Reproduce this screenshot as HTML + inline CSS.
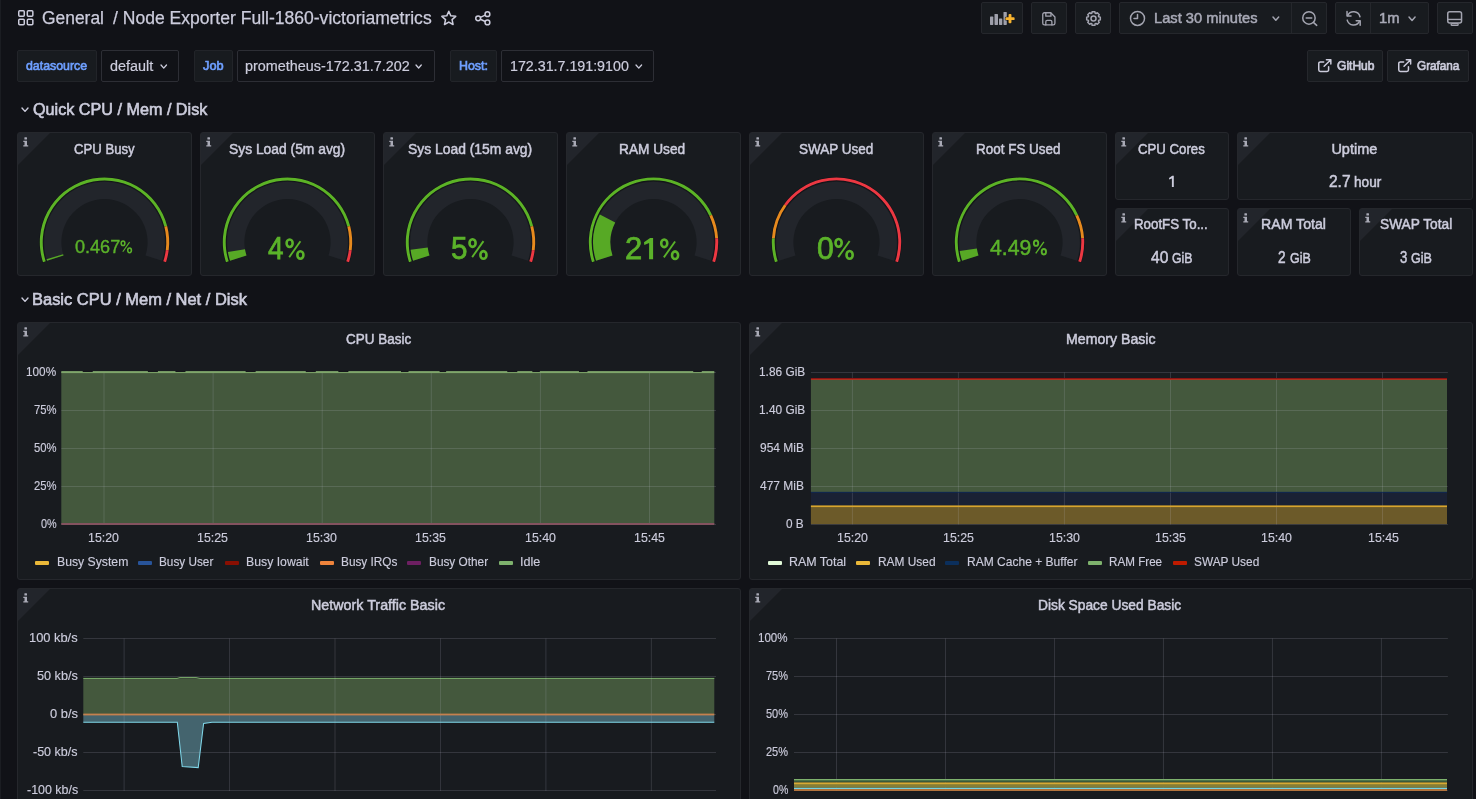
<!DOCTYPE html>
<html><head><meta charset="utf-8"><title>Node Exporter Full</title><style>
html,body{margin:0;padding:0;background:#111217;}
body{width:1476px;height:799px;overflow:hidden;position:relative;font-family:"Liberation Sans", sans-serif;}
.t{position:absolute;line-height:1;white-space:pre;transform-origin:0 0;}
.b{position:absolute;box-sizing:border-box;}
.p{position:absolute;box-sizing:border-box;background:#181b1f;border:1px solid #25272c;border-radius:3px;overflow:hidden;}
svg{position:absolute;overflow:visible;}
</style></head><body>
<div class="b" style="left:0.00px;top:0.00px;width:1.20px;height:799.00px;background:#1b1d22;border-radius:0px;"></div>
<svg style="left:17.80px;top:10.00px;" width="15.6" height="15.6" viewBox="0 0 15.6 15.6"><rect x="0.75" y="0.75" width="5.52" height="5.52" rx="1" fill="none" stroke="#ccccdc" stroke-width="1.5"/><rect x="0.75" y="9.33" width="5.52" height="5.52" rx="1" fill="none" stroke="#ccccdc" stroke-width="1.5"/><rect x="9.33" y="0.75" width="5.52" height="5.52" rx="1" fill="none" stroke="#ccccdc" stroke-width="1.5"/><rect x="9.33" y="9.33" width="5.52" height="5.52" rx="1" fill="none" stroke="#ccccdc" stroke-width="1.5"/></svg>
<svg style="left:0;top:0" width="1476" height="60"><polygon points="448.80,11.30 450.82,15.82 455.74,16.34 452.06,19.66 453.09,24.51 448.80,22.03 444.51,24.51 445.54,19.66 441.86,16.34 446.78,15.82" fill="none" stroke="#ccccdc" stroke-width="1.5" stroke-linejoin="round"/></svg>
<svg style="left:475.00px;top:10.60px;" width="15.600000000000023" height="14.6" viewBox="0 0 15.600000000000023 14.6"><circle cx="12.45" cy="3.15" r="2.40" fill="none" stroke="#ccccdc" stroke-width="1.5"/><circle cx="3.15" cy="7.30" r="2.40" fill="none" stroke="#ccccdc" stroke-width="1.5"/><circle cx="12.45" cy="11.45" r="2.40" fill="none" stroke="#ccccdc" stroke-width="1.5"/><line x1="5.34" y1="6.32" x2="10.26" y2="4.13" stroke="#ccccdc" stroke-width="1.5"/><line x1="5.34" y1="8.28" x2="10.26" y2="10.47" stroke="#ccccdc" stroke-width="1.5"/></svg>
<div class="b" style="left:981.40px;top:2.00px;width:41.80px;height:32.00px;background:#181b1f;border-radius:2px;border:1px solid #25272c;"></div>
<div class="b" style="left:1031.30px;top:2.00px;width:35.90px;height:32.00px;background:#181b1f;border-radius:2px;border:1px solid #25272c;"></div>
<div class="b" style="left:1075.30px;top:2.00px;width:36.00px;height:32.00px;background:#181b1f;border-radius:2px;border:1px solid #25272c;"></div>
<div class="b" style="left:1119.40px;top:2.00px;width:207.90px;height:32.00px;background:#181b1f;border-radius:2px;border:1px solid #25272c;"></div>
<div class="b" style="left:1335.40px;top:2.00px;width:93.40px;height:32.00px;background:#181b1f;border-radius:2px;border:1px solid #25272c;"></div>
<div class="b" style="left:1437.20px;top:2.00px;width:35.60px;height:32.00px;background:#181b1f;border-radius:2px;border:1px solid #25272c;"></div>
<div class="b" style="left:1291.20px;top:2.00px;width:1.00px;height:32.00px;background:#25272c;border-radius:0px;"></div>
<div class="b" style="left:1370.10px;top:2.00px;width:1.00px;height:32.00px;background:#25272c;border-radius:0px;"></div>
<svg style="left:0;top:0" width="1476" height="40"><rect x="990.00" y="16.60" width="3.30" height="8.30" rx="0.6" fill="#9fa0ab"/><rect x="994.50" y="14.00" width="3.50" height="10.90" rx="0.6" fill="#9fa0ab"/><rect x="999.00" y="18.50" width="3.30" height="6.40" rx="0.6" fill="#9fa0ab"/><rect x="1003.50" y="11.90" width="3.30" height="13.00" rx="0.6" fill="#9fa0ab"/><rect x="1004.90" y="16.65" width="10.2" height="3.9" rx="1.2" fill="#181b1f"/><rect x="1008.05" y="13.50" width="3.9" height="10.2" rx="1.2" fill="#181b1f"/><rect x="1005.40" y="17.15" width="9.2" height="2.9" rx="0.9" fill="#f7b32f"/><rect x="1008.55" y="14.00" width="2.9" height="9.2" rx="0.9" fill="#f7b32f"/></svg>
<svg style="left:1042.00px;top:11.80px;" width="13.7" height="13.7" viewBox="0 0 13.7 13.7"><g transform="scale(0.7611)" fill="none" stroke="#a3a4b0" stroke-width="1.7" stroke-linejoin="round" stroke-linecap="round"><path d="M3.2,1 H11.5 L17,6.5 V14.8 A2.2,2.2 0 0 1 14.8,17 H3.2 A2.2,2.2 0 0 1 1,14.8 V3.2 A2.2,2.2 0 0 1 3.2,1 Z"/><path d="M5,1 V5.5 H11.8 V1.5"/><path d="M5,17 V12.8 A1.8,1.8 0 0 1 6.8,11 H11.2 A1.8,1.8 0 0 1 13,12.8 V17"/></g></svg>
<svg style="left:0;top:0" width="1476" height="40"><path d="M1098.81,16.86 L1100.31,17.12 L1100.31,19.88 L1098.81,20.14 L1098.42,21.09 L1099.29,22.34 L1097.34,24.29 L1096.09,23.42 L1095.14,23.81 L1094.88,25.31 L1092.12,25.31 L1091.86,23.81 L1090.91,23.42 L1089.66,24.29 L1087.71,22.34 L1088.58,21.09 L1088.19,20.14 L1086.69,19.88 L1086.69,17.12 L1088.19,16.86 L1088.58,15.91 L1087.71,14.66 L1089.66,12.71 L1090.91,13.58 L1091.86,13.19 L1092.12,11.69 L1094.88,11.69 L1095.14,13.19 L1096.09,13.58 L1097.34,12.71 L1099.29,14.66 L1098.42,15.91 Z" fill="none" stroke="#a3a4b0" stroke-width="1.5" stroke-linejoin="round"/><circle cx="1093.50" cy="18.50" r="2.50" fill="none" stroke="#a3a4b0" stroke-width="1.5"/></svg>
<svg style="left:0;top:0" width="1476" height="40"><circle cx="1137.50" cy="18.40" r="7.00" fill="none" stroke="#a3a4b0" stroke-width="1.5"/><polyline points="1137.50,14.55 1137.50,18.40 1134.00,18.40" fill="none" stroke="#a3a4b0" stroke-width="1.5" stroke-linecap="round" stroke-linejoin="round"/></svg>
<svg style="left:1272.75px;top:17.00px;" width="5.7000000000000455" height="3.192000000000026" viewBox="0 0 5.7000000000000455 3.192000000000026"><polyline points="0,0 2.85,3.19 5.70,0" fill="none" stroke="#a3a4b0" stroke-width="1.5" stroke-linecap="round" stroke-linejoin="round"/></svg>
<svg style="left:1301.80px;top:10.90px;" width="15.5" height="15.1" viewBox="0 0 15.5 15.1"><circle cx="6.95" cy="6.95" r="6.20" fill="none" stroke="#a3a4b0" stroke-width="1.5"/><line x1="11.41" y1="11.41" x2="14.70" y2="14.30" stroke="#a3a4b0" stroke-width="1.6" stroke-linecap="round"/><line x1="4.16" y1="6.95" x2="9.74" y2="6.95" stroke="#a3a4b0" stroke-width="1.5" stroke-linecap="round"/></svg>
<svg style="left:0;top:0" width="1476" height="40"><g transform="translate(2707.20,0) scale(-1,1)"><path d="M1347.22,16.69 A6.60,6.60 0 0 1 1359.58,15.61" fill="none" stroke="#a3a4b0" stroke-width="1.5" stroke-linecap="round"/><path d="M1359.98,20.11 A6.60,6.60 0 0 1 1347.62,21.19" fill="none" stroke="#a3a4b0" stroke-width="1.5" stroke-linecap="round"/><polyline points="1360.18,11.61 1360.18,16.01 1356.18,16.01" fill="none" stroke="#a3a4b0" stroke-width="1.5" stroke-linecap="round" stroke-linejoin="round"/><polyline points="1347.02,25.19 1347.02,20.79 1351.02,20.79" fill="none" stroke="#a3a4b0" stroke-width="1.5" stroke-linecap="round" stroke-linejoin="round"/></g></svg>
<svg style="left:1409.15px;top:16.89px;" width="6.099999999999909" height="3.4159999999999493" viewBox="0 0 6.099999999999909 3.4159999999999493"><polyline points="0,0 3.05,3.42 6.10,0" fill="none" stroke="#a3a4b0" stroke-width="1.5" stroke-linecap="round" stroke-linejoin="round"/></svg>
<svg style="left:1447.30px;top:10.90px;" width="15.299999999999955" height="15.1" viewBox="0 0 15.299999999999955 15.1"><rect x="0.75" y="0.75" width="13.80" height="11.25" rx="2" fill="none" stroke="#a3a4b0" stroke-width="1.5"/><line x1="0.75" y1="8.46" x2="14.55" y2="8.46" stroke="#a3a4b0" stroke-width="1.4"/><rect x="4.13" y="12.73" width="7.04" height="1.72" rx="0.9" fill="none" stroke="#a3a4b0" stroke-width="1.3"/></svg>
<div class="b" style="left:16.60px;top:50.00px;width:80.00px;height:32.00px;background:#181b1f;border-radius:2px;border:1px solid #222429;"></div>
<div class="b" style="left:100.60px;top:50.00px;width:78.40px;height:32.00px;background:#111217;border-radius:2px;border:1px solid #2d2e35;"></div>
<div class="b" style="left:194.30px;top:50.00px;width:38.30px;height:32.00px;background:#181b1f;border-radius:2px;border:1px solid #222429;"></div>
<div class="b" style="left:237.00px;top:50.00px;width:197.60px;height:32.00px;background:#111217;border-radius:2px;border:1px solid #2d2e35;"></div>
<div class="b" style="left:450.00px;top:50.00px;width:46.80px;height:32.00px;background:#181b1f;border-radius:2px;border:1px solid #222429;"></div>
<div class="b" style="left:501.30px;top:50.00px;width:152.50px;height:32.00px;background:#111217;border-radius:2px;border:1px solid #2d2e35;"></div>
<svg style="left:160.65px;top:64.76px;" width="5.5" height="3.08" viewBox="0 0 5.5 3.08"><polyline points="0,0 2.75,3.08 5.50,0" fill="none" stroke="#ccccdc" stroke-width="1.3" stroke-linecap="round" stroke-linejoin="round"/></svg>
<svg style="left:416.25px;top:64.82px;" width="5.300000000000011" height="2.9680000000000066" viewBox="0 0 5.300000000000011 2.9680000000000066"><polyline points="0,0 2.65,2.97 5.30,0" fill="none" stroke="#ccccdc" stroke-width="1.3" stroke-linecap="round" stroke-linejoin="round"/></svg>
<svg style="left:635.55px;top:64.73px;" width="5.600000000000023" height="3.136000000000013" viewBox="0 0 5.600000000000023 3.136000000000013"><polyline points="0,0 2.80,3.14 5.60,0" fill="none" stroke="#ccccdc" stroke-width="1.3" stroke-linecap="round" stroke-linejoin="round"/></svg>
<div class="b" style="left:1307.10px;top:50.00px;width:76.30px;height:32.00px;background:#181b1f;border-radius:2px;border:1px solid #25272c;"></div>
<div class="b" style="left:1387.30px;top:50.00px;width:81.70px;height:32.00px;background:#181b1f;border-radius:2px;border:1px solid #25272c;"></div>
<svg style="left:1317.80px;top:59.40px;" width="13.600000000000136" height="13.199999999999996" viewBox="0 0 13.600000000000136 13.199999999999996"><path d="M5.71,2.90 H2.35 A1.6,1.6 0 0 0 0.75,4.50 V10.85 A1.6,1.6 0 0 0 2.35,12.45 H9.01 A1.6,1.6 0 0 0 10.61,10.85 V7.66" fill="none" stroke="#ccccdc" stroke-width="1.5" stroke-linecap="round"/><path d="M6.12,7.26 L12.85,0.75 M8.43,0.75 H12.85 V5.02" fill="none" stroke="#ccccdc" stroke-width="1.5" stroke-linecap="round" stroke-linejoin="round"/></svg>
<svg style="left:1397.80px;top:59.40px;" width="13.400000000000091" height="13.199999999999996" viewBox="0 0 13.400000000000091 13.199999999999996"><path d="M5.63,2.90 H2.35 A1.6,1.6 0 0 0 0.75,4.50 V10.85 A1.6,1.6 0 0 0 2.35,12.45 H8.85 A1.6,1.6 0 0 0 10.45,10.85 V7.66" fill="none" stroke="#ccccdc" stroke-width="1.5" stroke-linecap="round"/><path d="M6.03,7.26 L12.65,0.75 M8.31,0.75 H12.65 V5.02" fill="none" stroke="#ccccdc" stroke-width="1.5" stroke-linecap="round" stroke-linejoin="round"/></svg>
<svg style="left:21.50px;top:107.52px;" width="6.0" height="3.3600000000000003" viewBox="0 0 6.0 3.3600000000000003"><polyline points="0,0 3.00,3.36 6.00,0" fill="none" stroke="#ccccdc" stroke-width="1.4" stroke-linecap="round" stroke-linejoin="round"/></svg>
<svg style="left:21.50px;top:297.52px;" width="6.0" height="3.3600000000000003" viewBox="0 0 6.0 3.3600000000000003"><polyline points="0,0 3.00,3.36 6.00,0" fill="none" stroke="#ccccdc" stroke-width="1.4" stroke-linecap="round" stroke-linejoin="round"/></svg>
<div class="p" style="left:17.00px;top:132.00px;width:175.00px;height:144.00px"></div>
<svg style="left:18.00px;top:133.00px;" width="32" height="32" viewBox="0 0 32 32"><polygon points="0,0 32,0 0,32" fill="#22252b"/><g transform="translate(-0.9,-1.0)" fill="#a9aab6"><rect x="7.3" y="5.2" width="2.6" height="2.3" rx="0.5"/><path d="M6.2,8.7 H9.9 V13.3 H11.1 V14.6 H6.2 V13.3 H7.4 V10 H6.2 Z"/></g></svg>
<svg style="left:0;top:0" width="1476" height="300"><path d="M47.06,260.86 A60.40,60.40 0 1 1 161.94,260.86 L145.49,255.52 A43.10,43.10 0 1 0 63.51,255.52 Z" fill="#22252b"/><path d="M47.06,260.86 A60.40,60.40 0 0 1 46.53,259.15 L63.13,254.30 A43.10,43.10 0 0 0 63.51,255.52 Z" fill="#57a925"/><path d="M42.60,262.67 A65.20,65.20 0 1 1 166.40,262.67 L162.51,261.38 A61.10,61.10 0 1 0 46.49,261.38 Z" fill="#121218"/><path d="M42.97,262.19 A64.70,64.70 0 1 1 167.17,226.11 L164.36,226.83 A61.80,61.80 0 1 0 45.72,261.30 Z" fill="#5cb326"/><path d="M167.17,226.11 A64.70,64.70 0 0 1 168.69,250.31 L165.81,249.95 A61.80,61.80 0 0 0 164.36,226.83 Z" fill="#e68a1e"/><path d="M168.69,250.31 A64.70,64.70 0 0 1 166.03,262.19 L163.28,261.30 A61.80,61.80 0 0 0 165.81,249.95 Z" fill="#ec3842"/></svg>
<div class="p" style="left:200.00px;top:132.00px;width:175.00px;height:144.00px"></div>
<svg style="left:201.00px;top:133.00px;" width="32" height="32" viewBox="0 0 32 32"><polygon points="0,0 32,0 0,32" fill="#22252b"/><g transform="translate(-0.9,-1.0)" fill="#a9aab6"><rect x="7.3" y="5.2" width="2.6" height="2.3" rx="0.5"/><path d="M6.2,8.7 H9.9 V13.3 H11.1 V14.6 H6.2 V13.3 H7.4 V10 H6.2 Z"/></g></svg>
<svg style="left:0;top:0" width="1476" height="300"><path d="M230.06,260.86 A60.40,60.40 0 1 1 344.94,260.86 L328.49,255.52 A43.10,43.10 0 1 0 246.51,255.52 Z" fill="#22252b"/><path d="M230.06,260.86 A60.40,60.40 0 0 1 227.90,252.02 L244.97,249.21 A43.10,43.10 0 0 0 246.51,255.52 Z" fill="#57a925"/><path d="M225.60,262.67 A65.20,65.20 0 1 1 349.40,262.67 L345.51,261.38 A61.10,61.10 0 1 0 229.49,261.38 Z" fill="#121218"/><path d="M225.97,262.19 A64.70,64.70 0 1 1 350.17,226.11 L347.36,226.83 A61.80,61.80 0 1 0 228.72,261.30 Z" fill="#5cb326"/><path d="M350.17,226.11 A64.70,64.70 0 0 1 351.69,250.31 L348.81,249.95 A61.80,61.80 0 0 0 347.36,226.83 Z" fill="#e68a1e"/><path d="M351.69,250.31 A64.70,64.70 0 0 1 349.03,262.19 L346.28,261.30 A61.80,61.80 0 0 0 348.81,249.95 Z" fill="#ec3842"/></svg>
<div class="p" style="left:383.00px;top:132.00px;width:175.00px;height:144.00px"></div>
<svg style="left:384.00px;top:133.00px;" width="32" height="32" viewBox="0 0 32 32"><polygon points="0,0 32,0 0,32" fill="#22252b"/><g transform="translate(-0.9,-1.0)" fill="#a9aab6"><rect x="7.3" y="5.2" width="2.6" height="2.3" rx="0.5"/><path d="M6.2,8.7 H9.9 V13.3 H11.1 V14.6 H6.2 V13.3 H7.4 V10 H6.2 Z"/></g></svg>
<svg style="left:0;top:0" width="1476" height="300"><path d="M413.06,260.86 A60.40,60.40 0 1 1 527.94,260.86 L511.49,255.52 A43.10,43.10 0 1 0 429.51,255.52 Z" fill="#22252b"/><path d="M413.06,260.86 A60.40,60.40 0 0 1 410.58,249.77 L427.74,247.60 A43.10,43.10 0 0 0 429.51,255.52 Z" fill="#57a925"/><path d="M408.60,262.67 A65.20,65.20 0 1 1 532.40,262.67 L528.51,261.38 A61.10,61.10 0 1 0 412.49,261.38 Z" fill="#121218"/><path d="M408.97,262.19 A64.70,64.70 0 1 1 533.17,226.11 L530.36,226.83 A61.80,61.80 0 1 0 411.72,261.30 Z" fill="#5cb326"/><path d="M533.17,226.11 A64.70,64.70 0 0 1 534.69,250.31 L531.81,249.95 A61.80,61.80 0 0 0 530.36,226.83 Z" fill="#e68a1e"/><path d="M534.69,250.31 A64.70,64.70 0 0 1 532.03,262.19 L529.28,261.30 A61.80,61.80 0 0 0 531.81,249.95 Z" fill="#ec3842"/></svg>
<div class="p" style="left:566.00px;top:132.00px;width:175.00px;height:144.00px"></div>
<svg style="left:567.00px;top:133.00px;" width="32" height="32" viewBox="0 0 32 32"><polygon points="0,0 32,0 0,32" fill="#22252b"/><g transform="translate(-0.9,-1.0)" fill="#a9aab6"><rect x="7.3" y="5.2" width="2.6" height="2.3" rx="0.5"/><path d="M6.2,8.7 H9.9 V13.3 H11.1 V14.6 H6.2 V13.3 H7.4 V10 H6.2 Z"/></g></svg>
<svg style="left:0;top:0" width="1476" height="300"><path d="M596.06,260.86 A60.40,60.40 0 1 1 710.94,260.86 L694.49,255.52 A43.10,43.10 0 1 0 612.51,255.52 Z" fill="#22252b"/><path d="M596.06,260.86 A60.40,60.40 0 0 1 599.86,214.44 L615.22,222.39 A43.10,43.10 0 0 0 612.51,255.52 Z" fill="#57a925"/><path d="M591.60,262.67 A65.20,65.20 0 1 1 715.40,262.67 L711.51,261.38 A61.10,61.10 0 1 0 595.49,261.38 Z" fill="#121218"/><path d="M591.97,262.19 A64.70,64.70 0 0 1 712.04,214.65 L709.42,215.89 A61.80,61.80 0 0 0 594.72,261.30 Z" fill="#5cb326"/><path d="M712.04,214.65 A64.70,64.70 0 0 1 718.07,238.14 L715.18,238.32 A61.80,61.80 0 0 0 709.42,215.89 Z" fill="#e68a1e"/><path d="M718.07,238.14 A64.70,64.70 0 0 1 715.03,262.19 L712.28,261.30 A61.80,61.80 0 0 0 715.18,238.32 Z" fill="#ec3842"/></svg>
<div class="p" style="left:749.00px;top:132.00px;width:175.00px;height:144.00px"></div>
<svg style="left:750.00px;top:133.00px;" width="32" height="32" viewBox="0 0 32 32"><polygon points="0,0 32,0 0,32" fill="#22252b"/><g transform="translate(-0.9,-1.0)" fill="#a9aab6"><rect x="7.3" y="5.2" width="2.6" height="2.3" rx="0.5"/><path d="M6.2,8.7 H9.9 V13.3 H11.1 V14.6 H6.2 V13.3 H7.4 V10 H6.2 Z"/></g></svg>
<svg style="left:0;top:0" width="1476" height="300"><path d="M779.06,260.86 A60.40,60.40 0 1 1 893.94,260.86 L877.49,255.52 A43.10,43.10 0 1 0 795.51,255.52 Z" fill="#22252b"/><path d="M774.60,262.67 A65.20,65.20 0 1 1 898.40,262.67 L894.51,261.38 A61.10,61.10 0 1 0 778.49,261.38 Z" fill="#121218"/><path d="M774.97,262.19 A64.70,64.70 0 0 1 771.93,238.14 L774.82,238.32 A61.80,61.80 0 0 0 777.72,261.30 Z" fill="#5cb326"/><path d="M771.93,238.14 A64.70,64.70 0 0 1 784.16,204.17 L786.50,205.87 A61.80,61.80 0 0 0 774.82,238.32 Z" fill="#e68a1e"/><path d="M784.16,204.17 A64.70,64.70 0 0 1 898.03,262.19 L895.28,261.30 A61.80,61.80 0 0 0 786.50,205.87 Z" fill="#ec3842"/></svg>
<div class="p" style="left:932.00px;top:132.00px;width:175.00px;height:144.00px"></div>
<svg style="left:933.00px;top:133.00px;" width="32" height="32" viewBox="0 0 32 32"><polygon points="0,0 32,0 0,32" fill="#22252b"/><g transform="translate(-0.9,-1.0)" fill="#a9aab6"><rect x="7.3" y="5.2" width="2.6" height="2.3" rx="0.5"/><path d="M6.2,8.7 H9.9 V13.3 H11.1 V14.6 H6.2 V13.3 H7.4 V10 H6.2 Z"/></g></svg>
<svg style="left:0;top:0" width="1476" height="300"><path d="M962.06,260.86 A60.40,60.40 0 1 1 1076.94,260.86 L1060.49,255.52 A43.10,43.10 0 1 0 978.51,255.52 Z" fill="#22252b"/><path d="M962.06,260.86 A60.40,60.40 0 0 1 959.73,250.92 L976.85,248.42 A43.10,43.10 0 0 0 978.51,255.52 Z" fill="#57a925"/><path d="M957.60,262.67 A65.20,65.20 0 1 1 1081.40,262.67 L1077.51,261.38 A61.10,61.10 0 1 0 961.49,261.38 Z" fill="#121218"/><path d="M957.97,262.19 A64.70,64.70 0 0 1 1078.04,214.65 L1075.42,215.89 A61.80,61.80 0 0 0 960.72,261.30 Z" fill="#5cb326"/><path d="M1078.04,214.65 A64.70,64.70 0 0 1 1084.07,238.14 L1081.18,238.32 A61.80,61.80 0 0 0 1075.42,215.89 Z" fill="#e68a1e"/><path d="M1084.07,238.14 A64.70,64.70 0 0 1 1081.03,262.19 L1078.28,261.30 A61.80,61.80 0 0 0 1081.18,238.32 Z" fill="#ec3842"/></svg>
<div class="p" style="left:1115.00px;top:132.00px;width:114.00px;height:68.00px"></div>
<svg style="left:1116.00px;top:133.00px;" width="32" height="32" viewBox="0 0 32 32"><polygon points="0,0 32,0 0,32" fill="#22252b"/><g transform="translate(-0.9,-1.0)" fill="#a9aab6"><rect x="7.3" y="5.2" width="2.6" height="2.3" rx="0.5"/><path d="M6.2,8.7 H9.9 V13.3 H11.1 V14.6 H6.2 V13.3 H7.4 V10 H6.2 Z"/></g></svg>
<div class="p" style="left:1237.00px;top:132.00px;width:236.00px;height:68.00px"></div>
<svg style="left:1238.00px;top:133.00px;" width="32" height="32" viewBox="0 0 32 32"><polygon points="0,0 32,0 0,32" fill="#22252b"/><g transform="translate(-0.9,-1.0)" fill="#a9aab6"><rect x="7.3" y="5.2" width="2.6" height="2.3" rx="0.5"/><path d="M6.2,8.7 H9.9 V13.3 H11.1 V14.6 H6.2 V13.3 H7.4 V10 H6.2 Z"/></g></svg>
<div class="p" style="left:1115.00px;top:208.00px;width:114.00px;height:68.00px"></div>
<svg style="left:1116.00px;top:209.00px;" width="32" height="32" viewBox="0 0 32 32"><polygon points="0,0 32,0 0,32" fill="#22252b"/><g transform="translate(-0.9,-1.0)" fill="#a9aab6"><rect x="7.3" y="5.2" width="2.6" height="2.3" rx="0.5"/><path d="M6.2,8.7 H9.9 V13.3 H11.1 V14.6 H6.2 V13.3 H7.4 V10 H6.2 Z"/></g></svg>
<div class="p" style="left:1237.00px;top:208.00px;width:114.00px;height:68.00px"></div>
<svg style="left:1238.00px;top:209.00px;" width="32" height="32" viewBox="0 0 32 32"><polygon points="0,0 32,0 0,32" fill="#22252b"/><g transform="translate(-0.9,-1.0)" fill="#a9aab6"><rect x="7.3" y="5.2" width="2.6" height="2.3" rx="0.5"/><path d="M6.2,8.7 H9.9 V13.3 H11.1 V14.6 H6.2 V13.3 H7.4 V10 H6.2 Z"/></g></svg>
<div class="p" style="left:1359.00px;top:208.00px;width:114.00px;height:68.00px"></div>
<svg style="left:1360.00px;top:209.00px;" width="32" height="32" viewBox="0 0 32 32"><polygon points="0,0 32,0 0,32" fill="#22252b"/><g transform="translate(-0.9,-1.0)" fill="#a9aab6"><rect x="7.3" y="5.2" width="2.6" height="2.3" rx="0.5"/><path d="M6.2,8.7 H9.9 V13.3 H11.1 V14.6 H6.2 V13.3 H7.4 V10 H6.2 Z"/></g></svg>
<div class="p" style="left:17.00px;top:322.00px;width:724.00px;height:258.00px"></div>
<svg style="left:18.00px;top:323.00px;" width="32" height="32" viewBox="0 0 32 32"><polygon points="0,0 32,0 0,32" fill="#22252b"/><g transform="translate(-0.9,-1.0)" fill="#a9aab6"><rect x="7.3" y="5.2" width="2.6" height="2.3" rx="0.5"/><path d="M6.2,8.7 H9.9 V13.3 H11.1 V14.6 H6.2 V13.3 H7.4 V10 H6.2 Z"/></g></svg>
<svg style="left:0;top:0" width="1476" height="799"><rect x="61.30" y="372" width="653.00" height="152" fill="#88b56c" fill-opacity="0.40"/><rect x="61.30" y="372.00" width="654.70" height="1" fill="rgba(204,204,220,0.155)"/><rect x="61.30" y="410.00" width="654.70" height="1" fill="rgba(204,204,220,0.155)"/><rect x="61.30" y="448.00" width="654.70" height="1" fill="rgba(204,204,220,0.155)"/><rect x="61.30" y="486.00" width="654.70" height="1" fill="rgba(204,204,220,0.155)"/><rect x="61.30" y="524.00" width="654.70" height="1" fill="rgba(204,204,220,0.155)"/><rect x="103.50" y="372.00" width="1" height="152.50" fill="rgba(204,204,220,0.155)"/><rect x="212.60" y="372.00" width="1" height="152.50" fill="rgba(204,204,220,0.155)"/><rect x="321.70" y="372.00" width="1" height="152.50" fill="rgba(204,204,220,0.155)"/><rect x="430.80" y="372.00" width="1" height="152.50" fill="rgba(204,204,220,0.155)"/><rect x="539.90" y="372.00" width="1" height="152.50" fill="rgba(204,204,220,0.155)"/><rect x="649.00" y="372.00" width="1" height="152.50" fill="rgba(204,204,220,0.155)"/><rect x="61.30" y="371.1" width="653.00" height="2.0" fill="#7fa66b"/><rect x="82.71" y="370.8" width="10.03" height="1.25" fill="#15171b"/><rect x="147.87" y="370.8" width="10.03" height="1.25" fill="#15171b"/><rect x="175.44" y="370.8" width="10.03" height="1.25" fill="#15171b"/><rect x="245.61" y="370.8" width="10.03" height="1.25" fill="#15171b"/><rect x="305.76" y="370.8" width="10.03" height="1.25" fill="#15171b"/><rect x="338.35" y="370.8" width="10.03" height="1.25" fill="#15171b"/><rect x="401.00" y="370.8" width="7.52" height="1.25" fill="#15171b"/><rect x="439.60" y="370.8" width="6.52" height="1.25" fill="#15171b"/><rect x="507.27" y="370.8" width="10.03" height="1.25" fill="#15171b"/><rect x="532.33" y="370.8" width="7.52" height="1.25" fill="#15171b"/><rect x="578.95" y="370.8" width="8.52" height="1.25" fill="#15171b"/><rect x="693.23" y="370.8" width="8.52" height="1.25" fill="#15171b"/><rect x="61.30" y="523" width="653.00" height="2" fill="#84525f"/></svg>
<div class="b" style="left:35.20px;top:561.00px;width:14.00px;height:4.20px;background:#EAB839;border-radius:1px;"></div>
<div class="b" style="left:137.90px;top:561.00px;width:14.00px;height:4.20px;background:#28549a;border-radius:1px;"></div>
<div class="b" style="left:224.80px;top:561.00px;width:14.00px;height:4.20px;background:#890F02;border-radius:1px;"></div>
<div class="b" style="left:319.90px;top:561.00px;width:14.00px;height:4.20px;background:#EF843C;border-radius:1px;"></div>
<div class="b" style="left:407.30px;top:561.00px;width:14.00px;height:4.20px;background:#6D1F62;border-radius:1px;"></div>
<div class="b" style="left:498.80px;top:561.00px;width:14.00px;height:4.20px;background:#7EB26D;border-radius:1px;"></div>
<div class="p" style="left:749.00px;top:322.00px;width:724.00px;height:258.00px"></div>
<svg style="left:750.00px;top:323.00px;" width="32" height="32" viewBox="0 0 32 32"><polygon points="0,0 32,0 0,32" fill="#22252b"/><g transform="translate(-0.9,-1.0)" fill="#a9aab6"><rect x="7.3" y="5.2" width="2.6" height="2.3" rx="0.5"/><path d="M6.2,8.7 H9.9 V13.3 H11.1 V14.6 H6.2 V13.3 H7.4 V10 H6.2 Z"/></g></svg>
<svg style="left:0;top:0" width="1476" height="799"><rect x="810.90" y="379.5" width="636.10" height="112.50" fill="#88b56c" fill-opacity="0.40"/><rect x="810.90" y="492" width="636.10" height="13.60" fill="#1d2a54" fill-opacity="0.40"/><rect x="810.90" y="505.6" width="636.10" height="18.50" fill="#EAB839" fill-opacity="0.40"/><rect x="810.90" y="372.00" width="637.00" height="1" fill="rgba(204,204,220,0.155)"/><rect x="810.90" y="410.00" width="637.00" height="1" fill="rgba(204,204,220,0.155)"/><rect x="810.90" y="448.00" width="637.00" height="1" fill="rgba(204,204,220,0.155)"/><rect x="810.90" y="486.00" width="637.00" height="1" fill="rgba(204,204,220,0.155)"/><rect x="810.90" y="524.00" width="637.00" height="1" fill="rgba(204,204,220,0.155)"/><rect x="851.90" y="372.50" width="1" height="152.00" fill="rgba(204,204,220,0.155)"/><rect x="957.90" y="372.50" width="1" height="152.00" fill="rgba(204,204,220,0.155)"/><rect x="1063.90" y="372.50" width="1" height="152.00" fill="rgba(204,204,220,0.155)"/><rect x="1170.00" y="372.50" width="1" height="152.00" fill="rgba(204,204,220,0.155)"/><rect x="1276.00" y="372.50" width="1" height="152.00" fill="rgba(204,204,220,0.155)"/><rect x="1382.00" y="372.50" width="1" height="152.00" fill="rgba(204,204,220,0.155)"/><rect x="810.90" y="378" width="636.10" height="1" fill="#8c1414"/><rect x="810.90" y="379" width="636.10" height="1" fill="#a8351f"/><rect x="810.90" y="491.8" width="636.10" height="1" fill="#0b2b5b" fill-opacity="0.8"/><rect x="810.90" y="505.5" width="636.10" height="1.6" fill="#d9a52e"/></svg>
<div class="b" style="left:767.60px;top:561.00px;width:14.00px;height:4.20px;background:#E0F9D7;border-radius:1px;"></div>
<div class="b" style="left:856.00px;top:561.00px;width:14.00px;height:4.20px;background:#EAB839;border-radius:1px;"></div>
<div class="b" style="left:945.40px;top:561.00px;width:14.00px;height:4.20px;background:#0b2f5c;border-radius:1px;"></div>
<div class="b" style="left:1087.70px;top:561.00px;width:14.00px;height:4.20px;background:#7EB26D;border-radius:1px;"></div>
<div class="b" style="left:1172.90px;top:561.00px;width:14.00px;height:4.20px;background:#BF1B00;border-radius:1px;"></div>
<div class="p" style="left:17.00px;top:588.00px;width:724.00px;height:258.00px"></div>
<svg style="left:18.00px;top:589.00px;" width="32" height="32" viewBox="0 0 32 32"><polygon points="0,0 32,0 0,32" fill="#22252b"/><g transform="translate(-0.9,-1.0)" fill="#a9aab6"><rect x="7.3" y="5.2" width="2.6" height="2.3" rx="0.5"/><path d="M6.2,8.7 H9.9 V13.3 H11.1 V14.6 H6.2 V13.3 H7.4 V10 H6.2 Z"/></g></svg>
<svg style="left:0;top:0" width="1476" height="799"><rect x="83.30" y="678.4" width="631.00" height="36.10" fill="#88b56c" fill-opacity="0.40"/><path d="M83.30,678.4 H177 L180,677.6 H196 L200,678.4 H714.30" fill="none" stroke="#7EB26D" stroke-width="1"/><path d="M83.30,722.3 H177.3 L182.2,766.5 L198.2,767.6 L203.6,723.4 L212,722.3 H714.30 V714.5 H83.30 Z" fill="#86d1e7" fill-opacity="0.40"/><rect x="83.30" y="638.00" width="632.70" height="1" fill="rgba(204,204,220,0.155)"/><rect x="83.30" y="676.00" width="632.70" height="1" fill="rgba(204,204,220,0.155)"/><rect x="83.30" y="714.00" width="632.70" height="1" fill="rgba(204,204,220,0.155)"/><rect x="83.30" y="752.00" width="632.70" height="1" fill="rgba(204,204,220,0.155)"/><rect x="83.30" y="790.00" width="632.70" height="1" fill="rgba(204,204,220,0.155)"/><rect x="123.60" y="638.50" width="1" height="152.50" fill="rgba(204,204,220,0.155)"/><rect x="229.05" y="638.50" width="1" height="152.50" fill="rgba(204,204,220,0.155)"/><rect x="334.50" y="638.50" width="1" height="152.50" fill="rgba(204,204,220,0.155)"/><rect x="439.95" y="638.50" width="1" height="152.50" fill="rgba(204,204,220,0.155)"/><rect x="545.40" y="638.50" width="1" height="152.50" fill="rgba(204,204,220,0.155)"/><rect x="650.85" y="638.50" width="1" height="152.50" fill="rgba(204,204,220,0.155)"/><path d="M83.30,722.3 H177.3 L182.2,766.5 L198.2,767.6 L203.6,723.4 L212,722.3 H714.30" fill="none" stroke="#7fd6e8" stroke-width="1.05"/><rect x="83.30" y="713.6" width="631.00" height="1.8" fill="#c5814f"/></svg>
<div class="p" style="left:749.00px;top:588.00px;width:724.00px;height:258.00px"></div>
<svg style="left:750.00px;top:589.00px;" width="32" height="32" viewBox="0 0 32 32"><polygon points="0,0 32,0 0,32" fill="#22252b"/><g transform="translate(-0.9,-1.0)" fill="#a9aab6"><rect x="7.3" y="5.2" width="2.6" height="2.3" rx="0.5"/><path d="M6.2,8.7 H9.9 V13.3 H11.1 V14.6 H6.2 V13.3 H7.4 V10 H6.2 Z"/></g></svg>
<svg style="left:0;top:0" width="1476" height="799"><rect x="794.00" y="638.00" width="653.90" height="1" fill="rgba(204,204,220,0.155)"/><rect x="794.00" y="676.00" width="653.90" height="1" fill="rgba(204,204,220,0.155)"/><rect x="794.00" y="714.00" width="653.90" height="1" fill="rgba(204,204,220,0.155)"/><rect x="794.00" y="752.00" width="653.90" height="1" fill="rgba(204,204,220,0.155)"/><rect x="794.00" y="790.00" width="653.90" height="1" fill="rgba(204,204,220,0.155)"/><rect x="836.00" y="638.50" width="1" height="152.50" fill="rgba(204,204,220,0.155)"/><rect x="944.98" y="638.50" width="1" height="152.50" fill="rgba(204,204,220,0.155)"/><rect x="1053.96" y="638.50" width="1" height="152.50" fill="rgba(204,204,220,0.155)"/><rect x="1162.94" y="638.50" width="1" height="152.50" fill="rgba(204,204,220,0.155)"/><rect x="1271.92" y="638.50" width="1" height="152.50" fill="rgba(204,204,220,0.155)"/><rect x="1380.90" y="638.50" width="1" height="152.50" fill="rgba(204,204,220,0.155)"/><rect x="794.00" y="780" width="653.00" height="2.4" fill="#3a5a3c"/><rect x="794.00" y="779" width="653.00" height="1.3" fill="#7EB26D"/><rect x="794.00" y="784" width="653.00" height="3.8" fill="#857e38"/><rect x="794.00" y="782.4" width="653.00" height="1.8" fill="#d8ab35"/><rect x="794.00" y="787.8" width="653.00" height="1.3" fill="#74d3e6"/><rect x="794.00" y="789.1" width="653.00" height="1.8" fill="#c07a3d"/></svg>
<svg style="left:0;top:0" width="1476" height="300"><ellipse cx="123.03" cy="243.21" rx="1.84" ry="2.29" fill="none" stroke="#5bb22a" stroke-width="1.56"/><ellipse cx="129.57" cy="250.37" rx="1.84" ry="2.29" fill="none" stroke="#5bb22a" stroke-width="1.56"/><line x1="129.60" y1="242.06" x2="122.78" y2="251.71" stroke="#5bb22a" stroke-width="1.13"/><ellipse cx="289.62" cy="243.20" rx="3.03" ry="3.77" fill="none" stroke="#5bb22a" stroke-width="2.56"/><ellipse cx="300.38" cy="254.98" rx="3.03" ry="3.77" fill="none" stroke="#5bb22a" stroke-width="2.56"/><line x1="300.43" y1="241.32" x2="289.21" y2="257.18" stroke="#5bb22a" stroke-width="1.86"/><ellipse cx="472.56" cy="243.03" rx="3.06" ry="3.80" fill="none" stroke="#5bb22a" stroke-width="2.59"/><ellipse cx="483.44" cy="254.94" rx="3.06" ry="3.80" fill="none" stroke="#5bb22a" stroke-width="2.59"/><line x1="483.48" y1="241.13" x2="472.15" y2="257.16" stroke="#5bb22a" stroke-width="1.88"/><polygon points="653.10,237.90 653.10,259.20 649.10,259.20 649.10,242.99 644.30,244.99 644.00,242.31 650.10,237.90" fill="#5bb22a"/><ellipse cx="664.24" cy="243.32" rx="3.04" ry="3.79" fill="none" stroke="#5bb22a" stroke-width="2.57"/><ellipse cx="675.06" cy="255.16" rx="3.04" ry="3.79" fill="none" stroke="#5bb22a" stroke-width="2.57"/><line x1="675.10" y1="241.42" x2="663.83" y2="257.37" stroke="#5bb22a" stroke-width="1.87"/><ellipse cx="838.60" cy="242.87" rx="3.09" ry="3.84" fill="none" stroke="#5bb22a" stroke-width="2.61"/><ellipse cx="849.60" cy="254.90" rx="3.09" ry="3.84" fill="none" stroke="#5bb22a" stroke-width="2.61"/><line x1="849.64" y1="240.95" x2="838.19" y2="257.14" stroke="#5bb22a" stroke-width="1.90"/><ellipse cx="1036.04" cy="243.20" rx="2.20" ry="2.74" fill="none" stroke="#5bb22a" stroke-width="1.86"/><ellipse cx="1043.86" cy="251.76" rx="2.20" ry="2.74" fill="none" stroke="#5bb22a" stroke-width="1.86"/><line x1="1043.89" y1="241.83" x2="1035.74" y2="253.36" stroke="#5bb22a" stroke-width="1.35"/><polygon points="1173.80,175.80 1173.80,187.00 1171.90,187.00 1171.90,178.48 1169.17,179.53 1169.02,178.12 1172.22,175.80" fill="#ccccdc"/></svg>
<div style="position:absolute;left:0;top:0;width:1476px;height:799px;will-change:transform"><div class="t" style="left:42.27px;top:9.20px;font-size:18.7px;color:#ccccdc;transform:scaleX(0.9323);-webkit-text-stroke:0.25px #ccccdc;">General</div>
<div class="t" style="left:113.30px;top:9.20px;font-size:18.7px;color:#ccccdc;transform:scaleX(0.9383);-webkit-text-stroke:0.25px #ccccdc;">/ Node Exporter Full-1860-victoriametrics</div>
<div class="t" style="left:25.70px;top:59.80px;font-size:12.46px;color:#6e9fff;transform:scaleX(0.9919);-webkit-text-stroke:0.65px #6e9fff;">datasource</div>
<div class="t" style="left:109.60px;top:58.80px;font-size:14.49px;color:#ccccdc;transform:scaleX(0.9932);-webkit-text-stroke:0.2px #ccccdc;">default</div>
<div class="t" style="left:202.70px;top:59.80px;font-size:12.46px;color:#6e9fff;transform:scaleX(1.0250);-webkit-text-stroke:0.65px #6e9fff;">Job</div>
<div class="t" style="left:244.51px;top:58.90px;font-size:14.49px;color:#ccccdc;transform:scaleX(0.9927);-webkit-text-stroke:0.2px #ccccdc;">prometheus-172.31.7.202</div>
<div class="t" style="left:458.70px;top:59.90px;font-size:12.46px;color:#6e9fff;transform:scaleX(0.9966);-webkit-text-stroke:0.65px #6e9fff;">Host:</div>
<div class="t" style="left:509.52px;top:58.90px;font-size:14.49px;color:#ccccdc;transform:scaleX(0.9833);-webkit-text-stroke:0.2px #ccccdc;">172.31.7.191:9100</div>
<div class="t" style="left:1153.59px;top:11.00px;font-size:14.49px;color:#a8a9b6;transform:scaleX(1.0129);-webkit-text-stroke:0.5px #a8a9b6;">Last 30 minutes</div>
<div class="t" style="left:1378.78px;top:11.00px;font-size:14.49px;color:#a8a9b6;transform:scaleX(1.0211);-webkit-text-stroke:0.5px #a8a9b6;">1m</div>
<div class="t" style="left:1336.70px;top:60.00px;font-size:12.61px;color:#ccccdc;transform:scaleX(0.9564);-webkit-text-stroke:0.7px #ccccdc;">GitHub</div>
<div class="t" style="left:1416.80px;top:60.00px;font-size:12.61px;color:#ccccdc;transform:scaleX(0.9304);-webkit-text-stroke:0.7px #ccccdc;">Grafana</div>
<div class="t" style="left:33.00px;top:101.00px;font-size:16.23px;color:#ccccdc;transform:scaleX(0.9971);-webkit-text-stroke:0.6px #ccccdc;">Quick CPU / Mem / Disk</div>
<div class="t" style="left:31.89px;top:290.60px;font-size:16.23px;color:#ccccdc;transform:scaleX(1.0147);-webkit-text-stroke:0.6px #ccccdc;">Basic CPU / Mem / Net / Disk</div>
<div class="t" style="left:73.60px;top:141.60px;font-size:14.49px;color:#ccccdc;transform:scaleX(0.9075);-webkit-text-stroke:0.5px #ccccdc;">CPU Busy</div>
<div class="t" style="left:229.00px;top:141.60px;font-size:14.49px;color:#ccccdc;transform:scaleX(0.9554);-webkit-text-stroke:0.5px #ccccdc;">Sys Load (5m avg)</div>
<div class="t" style="left:408.00px;top:141.60px;font-size:14.49px;color:#ccccdc;transform:scaleX(0.9581);-webkit-text-stroke:0.5px #ccccdc;">Sys Load (15m avg)</div>
<div class="t" style="left:619.46px;top:141.60px;font-size:14.49px;color:#ccccdc;transform:scaleX(0.9449);-webkit-text-stroke:0.5px #ccccdc;">RAM Used</div>
<div class="t" style="left:799.40px;top:141.60px;font-size:14.49px;color:#ccccdc;transform:scaleX(0.9316);-webkit-text-stroke:0.5px #ccccdc;">SWAP Used</div>
<div class="t" style="left:976.47px;top:141.60px;font-size:14.49px;color:#ccccdc;transform:scaleX(0.9289);-webkit-text-stroke:0.5px #ccccdc;">Root FS Used</div>
<div class="t" style="left:1138.40px;top:141.60px;font-size:14.49px;color:#ccccdc;transform:scaleX(0.9123);-webkit-text-stroke:0.5px #ccccdc;">CPU Cores</div>
<div class="t" style="left:1331.40px;top:141.60px;font-size:14.49px;color:#ccccdc;transform:scaleX(1.0000);-webkit-text-stroke:0.5px #ccccdc;">Uptime</div>
<div class="t" style="left:1134.48px;top:217.40px;font-size:14.49px;color:#ccccdc;transform:scaleX(0.9190);-webkit-text-stroke:0.5px #ccccdc;">RootFS To...</div>
<div class="t" style="left:1261.32px;top:217.40px;font-size:14.49px;color:#ccccdc;transform:scaleX(0.9754);-webkit-text-stroke:0.5px #ccccdc;">RAM Total</div>
<div class="t" style="left:1379.60px;top:217.40px;font-size:14.49px;color:#ccccdc;transform:scaleX(0.9474);-webkit-text-stroke:0.5px #ccccdc;">SWAP Total</div>
<div class="t" style="left:345.90px;top:331.60px;font-size:14.49px;color:#ccccdc;transform:scaleX(0.9300);-webkit-text-stroke:0.5px #ccccdc;">CPU Basic</div>
<div class="t" style="left:1065.72px;top:331.60px;font-size:14.49px;color:#ccccdc;transform:scaleX(0.9758);-webkit-text-stroke:0.5px #ccccdc;">Memory Basic</div>
<div class="t" style="left:310.81px;top:597.60px;font-size:14.49px;color:#ccccdc;transform:scaleX(0.9874);-webkit-text-stroke:0.5px #ccccdc;">Network Traffic Basic</div>
<div class="t" style="left:1038.35px;top:597.60px;font-size:14.49px;color:#ccccdc;transform:scaleX(0.9507);-webkit-text-stroke:0.5px #ccccdc;">Disk Space Used Basic</div>
<div class="t" style="left:74.80px;top:237.70px;font-size:18.26px;color:#5bb22a;transform:scaleX(0.9889);-webkit-text-stroke:0.4px #5bb22a;">0.467</div>
<div class="t" style="left:267.80px;top:233.00px;font-size:30.43px;color:#5bb22a;transform:scaleX(0.9176);-webkit-text-stroke:0.75px #5bb22a;">4</div>
<div class="t" style="left:450.83px;top:233.00px;font-size:30.43px;color:#5bb22a;transform:scaleX(0.9733);-webkit-text-stroke:0.75px #5bb22a;">5</div>
<div class="t" style="left:624.98px;top:233.00px;font-size:30.43px;color:#5bb22a;transform:scaleX(1.0200);-webkit-text-stroke:0.75px #5bb22a;">2</div>
<div class="t" style="left:816.71px;top:233.00px;font-size:30.43px;color:#5bb22a;transform:scaleX(0.9933);-webkit-text-stroke:0.75px #5bb22a;">0</div>
<div class="t" style="left:990.40px;top:236.60px;font-size:22.32px;color:#5bb22a;transform:scaleX(0.9512);-webkit-text-stroke:0.5px #5bb22a;">4.49</div>
<div class="t" style="left:1328.60px;top:174.00px;font-size:15.94px;color:#ccccdc;transform:scaleX(0.9727);-webkit-text-stroke:0.5px #ccccdc;">2.7</div>
<div class="t" style="left:1353.60px;top:176.00px;font-size:13.91px;color:#ccccdc;transform:scaleX(0.9786);-webkit-text-stroke:0.5px #ccccdc;">hour</div>
<div class="t" style="left:1151.00px;top:250.00px;font-size:15.94px;color:#ccccdc;transform:scaleX(0.9778);-webkit-text-stroke:0.5px #ccccdc;">40</div>
<div class="t" style="left:1172.00px;top:251.00px;font-size:14.93px;color:#ccccdc;transform:scaleX(0.8240);-webkit-text-stroke:0.5px #ccccdc;">GiB</div>
<div class="t" style="left:1277.50px;top:250.00px;font-size:15.94px;color:#ccccdc;transform:scaleX(0.8556);-webkit-text-stroke:0.5px #ccccdc;">2</div>
<div class="t" style="left:1289.80px;top:251.00px;font-size:14.93px;color:#ccccdc;transform:scaleX(0.8320);-webkit-text-stroke:0.5px #ccccdc;">GiB</div>
<div class="t" style="left:1399.60px;top:250.00px;font-size:15.94px;color:#ccccdc;transform:scaleX(0.8222);-webkit-text-stroke:0.5px #ccccdc;">3</div>
<div class="t" style="left:1411.40px;top:251.00px;font-size:14.93px;color:#ccccdc;transform:scaleX(0.8400);-webkit-text-stroke:0.5px #ccccdc;">GiB</div>
<div class="t" style="left:26.25px;top:366.10px;font-size:12.46px;color:#ccccdc;transform:scaleX(0.9452);-webkit-text-stroke:0.15px #ccccdc;">100%</div>
<div class="t" style="left:33.90px;top:404.20px;font-size:12.46px;color:#ccccdc;transform:scaleX(0.9040);-webkit-text-stroke:0.15px #ccccdc;">75%</div>
<div class="t" style="left:33.90px;top:442.20px;font-size:12.46px;color:#ccccdc;transform:scaleX(0.9040);-webkit-text-stroke:0.15px #ccccdc;">50%</div>
<div class="t" style="left:33.90px;top:480.20px;font-size:12.46px;color:#ccccdc;transform:scaleX(0.9040);-webkit-text-stroke:0.15px #ccccdc;">25%</div>
<div class="t" style="left:40.80px;top:518.10px;font-size:12.46px;color:#ccccdc;transform:scaleX(0.8722);-webkit-text-stroke:0.15px #ccccdc;">0%</div>
<div class="t" style="left:758.65px;top:366.20px;font-size:12.46px;color:#ccccdc;transform:scaleX(0.9532);-webkit-text-stroke:0.15px #ccccdc;">1.86 GiB</div>
<div class="t" style="left:758.65px;top:404.20px;font-size:12.46px;color:#ccccdc;transform:scaleX(0.9532);-webkit-text-stroke:0.15px #ccccdc;">1.40 GiB</div>
<div class="t" style="left:760.20px;top:442.20px;font-size:12.46px;color:#ccccdc;transform:scaleX(0.9609);-webkit-text-stroke:0.15px #ccccdc;">954 MiB</div>
<div class="t" style="left:760.20px;top:480.20px;font-size:12.46px;color:#ccccdc;transform:scaleX(0.9609);-webkit-text-stroke:0.15px #ccccdc;">477 MiB</div>
<div class="t" style="left:786.40px;top:518.20px;font-size:12.46px;color:#ccccdc;transform:scaleX(0.9474);-webkit-text-stroke:0.15px #ccccdc;">0 B</div>
<div class="t" style="left:28.97px;top:632.30px;font-size:12.46px;color:#ccccdc;transform:scaleX(1.0326);-webkit-text-stroke:0.15px #ccccdc;">100 kb/s</div>
<div class="t" style="left:36.80px;top:670.40px;font-size:12.46px;color:#ccccdc;transform:scaleX(1.0175);-webkit-text-stroke:0.15px #ccccdc;">50 kb/s</div>
<div class="t" style="left:49.60px;top:708.30px;font-size:12.46px;color:#ccccdc;transform:scaleX(1.0333);-webkit-text-stroke:0.15px #ccccdc;">0 b/s</div>
<div class="t" style="left:33.40px;top:746.30px;font-size:12.46px;color:#ccccdc;transform:scaleX(1.0023);-webkit-text-stroke:0.15px #ccccdc;">-50 kb/s</div>
<div class="t" style="left:26.60px;top:784.40px;font-size:12.46px;color:#ccccdc;transform:scaleX(0.9980);-webkit-text-stroke:0.15px #ccccdc;">-100 kb/s</div>
<div class="t" style="left:758.07px;top:632.30px;font-size:12.46px;color:#ccccdc;transform:scaleX(0.9290);-webkit-text-stroke:0.15px #ccccdc;">100%</div>
<div class="t" style="left:765.70px;top:670.40px;font-size:12.46px;color:#ccccdc;transform:scaleX(0.8840);-webkit-text-stroke:0.15px #ccccdc;">75%</div>
<div class="t" style="left:765.70px;top:708.30px;font-size:12.46px;color:#ccccdc;transform:scaleX(0.8840);-webkit-text-stroke:0.15px #ccccdc;">50%</div>
<div class="t" style="left:765.70px;top:746.30px;font-size:12.46px;color:#ccccdc;transform:scaleX(0.8840);-webkit-text-stroke:0.15px #ccccdc;">25%</div>
<div class="t" style="left:772.50px;top:783.70px;font-size:12.46px;color:#ccccdc;transform:scaleX(0.8500);-webkit-text-stroke:0.15px #ccccdc;">0%</div>
<div class="t" style="left:88.11px;top:532.10px;font-size:12.46px;color:#ccccdc;transform:scaleX(0.9933);-webkit-text-stroke:0.15px #ccccdc;">15:20</div>
<div class="t" style="left:197.21px;top:532.10px;font-size:12.46px;color:#ccccdc;transform:scaleX(0.9933);-webkit-text-stroke:0.15px #ccccdc;">15:25</div>
<div class="t" style="left:306.31px;top:532.10px;font-size:12.46px;color:#ccccdc;transform:scaleX(0.9933);-webkit-text-stroke:0.15px #ccccdc;">15:30</div>
<div class="t" style="left:415.41px;top:532.10px;font-size:12.46px;color:#ccccdc;transform:scaleX(0.9933);-webkit-text-stroke:0.15px #ccccdc;">15:35</div>
<div class="t" style="left:524.51px;top:532.10px;font-size:12.46px;color:#ccccdc;transform:scaleX(0.9933);-webkit-text-stroke:0.15px #ccccdc;">15:40</div>
<div class="t" style="left:633.61px;top:532.10px;font-size:12.46px;color:#ccccdc;transform:scaleX(0.9933);-webkit-text-stroke:0.15px #ccccdc;">15:45</div>
<div class="t" style="left:837.11px;top:532.10px;font-size:12.46px;color:#ccccdc;transform:scaleX(0.9933);-webkit-text-stroke:0.15px #ccccdc;">15:20</div>
<div class="t" style="left:943.11px;top:532.10px;font-size:12.46px;color:#ccccdc;transform:scaleX(0.9933);-webkit-text-stroke:0.15px #ccccdc;">15:25</div>
<div class="t" style="left:1049.11px;top:532.10px;font-size:12.46px;color:#ccccdc;transform:scaleX(0.9933);-webkit-text-stroke:0.15px #ccccdc;">15:30</div>
<div class="t" style="left:1155.21px;top:532.10px;font-size:12.46px;color:#ccccdc;transform:scaleX(0.9933);-webkit-text-stroke:0.15px #ccccdc;">15:35</div>
<div class="t" style="left:1261.21px;top:532.10px;font-size:12.46px;color:#ccccdc;transform:scaleX(0.9933);-webkit-text-stroke:0.15px #ccccdc;">15:40</div>
<div class="t" style="left:1367.51px;top:532.10px;font-size:12.46px;color:#ccccdc;transform:scaleX(0.9933);-webkit-text-stroke:0.15px #ccccdc;">15:45</div>
<div class="t" style="left:56.62px;top:556.40px;font-size:12.46px;color:#ccccdc;transform:scaleX(0.9817);-webkit-text-stroke:0.15px #ccccdc;">Busy System</div>
<div class="t" style="left:159.45px;top:556.40px;font-size:12.46px;color:#ccccdc;transform:scaleX(0.9456);-webkit-text-stroke:0.15px #ccccdc;">Busy User</div>
<div class="t" style="left:245.91px;top:556.40px;font-size:12.46px;color:#ccccdc;transform:scaleX(0.9857);-webkit-text-stroke:0.15px #ccccdc;">Busy Iowait</div>
<div class="t" style="left:341.05px;top:556.40px;font-size:12.46px;color:#ccccdc;transform:scaleX(0.9483);-webkit-text-stroke:0.15px #ccccdc;">Busy IRQs</div>
<div class="t" style="left:428.65px;top:556.40px;font-size:12.46px;color:#ccccdc;transform:scaleX(0.9484);-webkit-text-stroke:0.15px #ccccdc;">Busy Other</div>
<div class="t" style="left:519.99px;top:556.40px;font-size:12.46px;color:#ccccdc;transform:scaleX(1.0105);-webkit-text-stroke:0.15px #ccccdc;">Idle</div>
<div class="t" style="left:789.10px;top:556.40px;font-size:12.46px;color:#ccccdc;transform:scaleX(0.9982);-webkit-text-stroke:0.15px #ccccdc;">RAM Total</div>
<div class="t" style="left:877.64px;top:556.40px;font-size:12.46px;color:#ccccdc;transform:scaleX(0.9559);-webkit-text-stroke:0.15px #ccccdc;">RAM Used</div>
<div class="t" style="left:966.63px;top:556.40px;font-size:12.46px;color:#ccccdc;transform:scaleX(0.9658);-webkit-text-stroke:0.15px #ccccdc;">RAM Cache + Buffer</div>
<div class="t" style="left:1109.06px;top:556.40px;font-size:12.46px;color:#ccccdc;transform:scaleX(0.9357);-webkit-text-stroke:0.15px #ccccdc;">RAM Free</div>
<div class="t" style="left:1193.95px;top:556.40px;font-size:12.46px;color:#ccccdc;transform:scaleX(0.9522);-webkit-text-stroke:0.15px #ccccdc;">SWAP Used</div></div>
</body></html>
